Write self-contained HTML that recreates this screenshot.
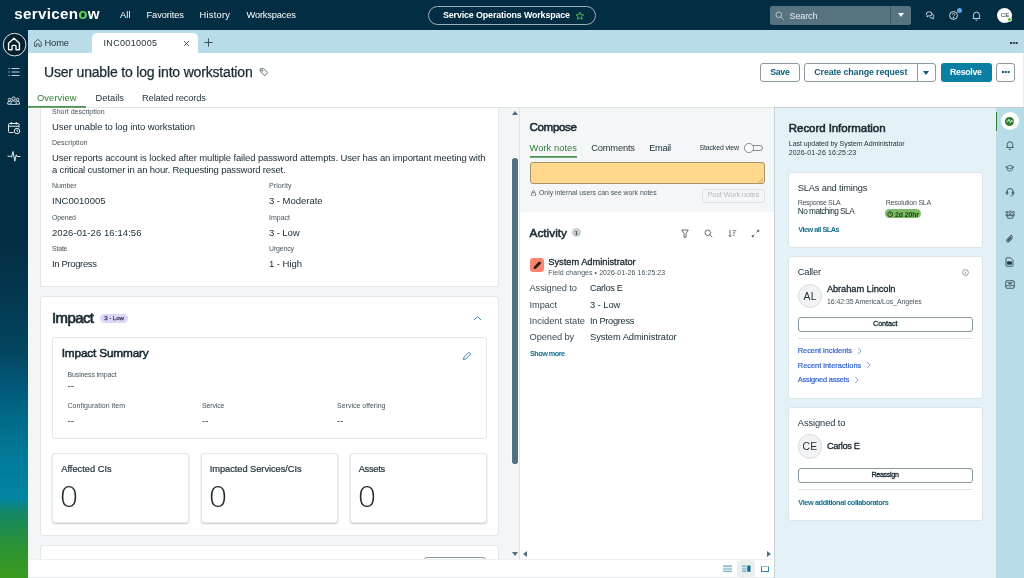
<!DOCTYPE html>
<html lang="en"><head><meta charset="utf-8"><title>INC0010005 | Service Operations Workspace</title>
<style>
*{box-sizing:border-box;margin:0;padding:0}
html,body{width:1024px;height:578px;overflow:hidden;background:#fff;font-family:"Liberation Sans",sans-serif;color:#182a33}
#root{position:absolute;left:0;top:0;width:1024px;height:578px;overflow:hidden;will-change:transform}
.a{position:absolute;white-space:nowrap}
.zero{font-family:"DejaVu Sans Light","DejaVu Sans","Liberation Sans",sans-serif;font-weight:200;font-size:27.500px;line-height:32px;color:#1d2a31;transform:scaleX(1.15);transform-origin:0 0}
</style></head><body>
<div id="root">
<div class="a" style="left:0px;top:0px;width:1024px;height:30px;background:#032d42"></div>
<div class="a" style="left:0px;top:30px;width:28px;height:548px;background:linear-gradient(180deg,#032d42 0%,#032d42 38%,#03374f 48%,#03455f 58.400%,#02587a 65%,#026a8a 70.800%,#027a99 78%,#0285a3 85.400%,#148768 88%,#1f8d4a 91.200%,#2e9430 95%,#3a9a1e 100%)"></div>
<div class="a" style="left:28px;top:30px;width:996px;height:23px;background:#b8dde8"></div>
<div class="a" style="left:28px;top:53px;width:996px;height:54.5px;background:#fff"></div>
<div class="a" style="left:28px;top:107px;width:746px;height:1px;background:#e0e5e8"></div>
<div class="a" style="left:774px;top:107px;width:250px;height:1px;background:#c4ced3"></div>
<div class="a" style="left:1023px;top:53px;width:1px;height:54px;background:#eceff0"></div>
<div class="a" style="left:28px;top:108px;width:491px;height:451px;background:#f3f5f6"></div>
<div class="a" style="left:519px;top:108px;width:1px;height:451px;background:#dfe4e7"></div>
<div class="a" style="left:520px;top:108px;width:254px;height:104px;background:#f4f6f7"></div>
<div class="a" style="left:520px;top:212px;width:254px;height:347px;background:#fff"></div>
<div class="a" style="left:774px;top:108px;width:1px;height:470px;background:#c8d2d7"></div>
<div class="a" style="left:775px;top:108px;width:221px;height:470px;background:#e4f1f6"></div>
<div class="a" style="left:996px;top:108px;width:28px;height:470px;background:#b8dde8"></div>
<div class="a" style="left:28px;top:558.5px;width:746px;height:1px;background:#edf0f1"></div>
<div class="a" style="left:28px;top:559.5px;width:746px;height:18.5px;background:#fff"></div>
<div class="a" style="left:28px;top:577px;width:746px;height:1px;background:#e9ecee"></div>
<div class="a" style="left:14.2px;top:4.2px;font-size:15.2px;line-height:20px;color:#fff;font-weight:bold;letter-spacing:0.3px;">servicen<span style="color:#62d84e">o</span>w</div>
<div class="a" style="left:120px;top:8.7px;font-size:9.3px;line-height:12px;letter-spacing:0.13px;color:#fff;">All</div>
<div class="a" style="left:146.5px;top:8.7px;font-size:9.3px;line-height:12px;letter-spacing:-0.09px;color:#fff;">Favorites</div>
<div class="a" style="left:199.5px;top:8.7px;font-size:9.3px;line-height:12px;letter-spacing:0.26px;color:#fff;">History</div>
<div class="a" style="left:246.5px;top:8.7px;font-size:9.3px;line-height:12px;letter-spacing:-0.17px;color:#fff;">Workspaces</div>
<div class="a" style="left:428px;top:6px;width:168px;height:19px;border:1px solid #9fb0b9;border-radius:10px"></div>
<div class="a" style="left:443px;top:8.8px;font-size:8.9px;line-height:12px;letter-spacing:-0.13px;color:#fff;font-weight:bold;">Service Operations Workspace</div>
<svg class="a" style="left:574.7px;top:10.5px" width="9.6" height="9.6" viewBox="0 0 24 24" ><path d="M12 3l2.700 6.200 6.600.600-5 4.400 1.500 6.500L12 17.300 6.200 20.700l1.500-6.500-5-4.400 6.600-.600z" fill="none" stroke="#62d84e" stroke-width="2" stroke-linejoin="round"/></svg>
<div class="a" style="left:770px;top:6px;width:141px;height:18.5px;background:#56737f;border-radius:2px"></div>
<div class="a" style="left:890px;top:6px;width:1px;height:18.5px;background:#3c5a67"></div>
<svg class="a" style="left:774.5px;top:10.5px" width="9.5" height="9.5" viewBox="0 0 20 20" ><circle cx="8" cy="8" r="6" fill="none" stroke="#dbe4e8" stroke-width="1.500"/><path d="M12.500 12.500L18 18" stroke="#dbe4e8" stroke-width="1.500"/></svg>
<div class="a" style="left:789.5px;top:9.6px;font-size:9px;line-height:12px;letter-spacing:-0.1px;color:#e6edf0;">Search</div>
<div class="a" style="left:897.500px;top:13px;width:0;height:0;border-left:3.500px solid transparent;border-right:3.500px solid transparent;border-top:4.500px solid #fff"></div>
<svg class="a" style="left:925px;top:10px" width="10.5" height="10.5" viewBox="0 0 24 24" fill="none" stroke="#e6edf0" stroke-width="2"><path d="M3 9a5 4.500 0 0 1 5-4.500h3a5 4.500 0 0 1 0 9H8l-3 2.500v-3.500A4.500 4.500 0 0 1 3 9z"/><path d="M15.500 9.500a4.500 4.500 0 0 1 3.500 7.500v3l-3-2h-2.500a4.500 4.500 0 0 1-3-1.500"/></svg>
<svg class="a" style="left:947.5px;top:9px" width="12" height="12" viewBox="0 0 26 26" fill="none" stroke="#e6edf0" stroke-width="2"><circle cx="12" cy="14" r="8.500"/><path d="M9.500 12a2.500 2.500 0 1 1 3.500 2.300c-.700.300-1 .700-1 1.500" stroke-width="1.800"/><circle cx="12" cy="18.500" r=".800" fill="#e6edf0"/></svg>
<div class="a" style="left:956.5px;top:7.5px;width:5px;height:5px;border-radius:50%;background:#5aa7e6"></div>
<svg class="a" style="left:971px;top:9.8px" width="11" height="11" viewBox="0 0 26 26" fill="none" stroke="#e6edf0" stroke-width="2"><path d="M6 18v-6a7 7 0 0 1 14 0v6l1.500 2h-17z" stroke-linejoin="round"/><path d="M11 22.500a2 2 0 0 0 4 0"/></svg>
<div class="a" style="left:997px;top:7.5px;width:15px;height:15px;border-radius:50%;background:#fff"></div>
<div class="a" style="left:1000.7px;top:10.9px;font-size:6.2px;line-height:8px;color:#182a33;">CE</div>
<div class="a" style="left:1006.5px;top:17px;width:5px;height:5px;border-radius:50%;background:#4fb33a;border:1px solid #fff"></div>
<svg class="a" style="left:1.5px;top:31.5px" width="26" height="26" viewBox="0 0 26 26" ><circle cx="12.600" cy="12.650" r="11.300" fill="#06202d" stroke="#dfe6ea" stroke-width="1"/></svg>
<svg class="a" style="left:6.1px;top:36px" width="16" height="16" viewBox="0 0 28 28" fill="none" stroke="#fff" stroke-width="2.400" stroke-linejoin="round"><path d="M4.500 12.500L14 4l9.500 8.500V23a1 1 0 0 1-1 1H17.500v-6a1.500 1.500 0 0 0-1.500-1.500h-4a1.500 1.500 0 0 0-1.500 1.500v6H5.500a1 1 0 0 1-1-1z"/></svg>
<svg class="a" style="left:8.2px;top:67.3px" width="12" height="10" viewBox="0 0 24 20" fill="none" stroke="#e8eef1" stroke-width="1.700"><path d="M7 3h16M7 10h16M7 17h16"/><path d="M1 3h2.500M1 10h2.500M1 17h2.500"/></svg>
<svg class="a" style="left:7.4px;top:96px" width="13.2" height="9.4" viewBox="0 0 28 20" fill="none" stroke="#e8eef1" stroke-width="1.900"><circle cx="14" cy="5.500" r="3.600"/><circle cx="5.500" cy="7.500" r="2.800"/><circle cx="22.500" cy="7.500" r="2.800"/><path d="M8.500 18.500v-4a4 4 0 0 1 4-4h3a4 4 0 0 1 4 4v4z"/><path d="M8 17.500H1.500v-3a3 3 0 0 1 3-3h3M20 17.500h6.500v-3a3 3 0 0 0-3-3h-3"/></svg>
<svg class="a" style="left:7px;top:121px" width="14" height="14" viewBox="0 0 28 28" fill="none" stroke="#e8eef1" stroke-width="2"><path d="M13 23H5a2 2 0 0 1-2-2V7a2 2 0 0 1 2-2h17a2 2 0 0 1 2 2v6"/><path d="M3 10.500h21M8.500 2v5M18.500 2v5"/><circle cx="20" cy="20" r="5.500"/><path d="M20 17v3.200l2 1"/></svg>
<svg class="a" style="left:7px;top:149px" width="14" height="14" viewBox="0 0 28 28" fill="none" stroke="#e8eef1" stroke-width="2" stroke-linejoin="round" stroke-linecap="round"><path d="M2 14.500h5l2 2 3-11.500 3.500 19.500 3-13 1.500 3.500H26"/></svg>
<svg class="a" style="left:32.8px;top:37.6px" width="9.8" height="9.8" viewBox="0 0 28 28" fill="none" stroke="#3a4d57" stroke-width="2.600" stroke-linejoin="round"><path d="M4.500 12.500L14 4l9.500 8.500V23a1 1 0 0 1-1 1H17.500v-6a1.500 1.500 0 0 0-1.500-1.500h-4a1.500 1.500 0 0 0-1.500 1.500v6H5.500a1 1 0 0 1-1-1z"/></svg>
<div class="a" style="left:44.5px;top:36.7px;font-size:9.3px;line-height:12px;letter-spacing:-0.1px;color:#22343d;">Home</div>
<div class="a" style="left:92px;top:33px;width:106px;height:20px;background:#fff;border-radius:5px 5px 0 0"></div>
<div class="a" style="left:103.5px;top:36.5px;font-size:9px;line-height:12px;letter-spacing:0.33px;color:#22343d;">INC0010005</div>
<svg class="a" style="left:183px;top:40px" width="7" height="7" viewBox="0 0 10 10" stroke="#3a4d57" stroke-width="1.300"><path d="M1.500 1.500l7 7M8.500 1.500l-7 7"/></svg>
<svg class="a" style="left:204px;top:38px" width="9" height="9" viewBox="0 0 10 10" stroke="#3a4d57" stroke-width="1.100"><path d="M5 .500v9M.500 5h9"/></svg>
<div class="a" style="left:1010px;top:41.5px;width:2px;height:2px;background:#2c3e47;box-shadow:2.800px 0 #2c3e47,5.600px 0 #2c3e47"></div>
<div class="a" style="left:44px;top:62.8px;font-size:14px;line-height:18px;letter-spacing:-0.18px;color:#182a33;-webkit-text-stroke:0.25px #182a33;">User unable to log into workstation</div>
<svg class="a" style="left:259px;top:67px" width="10" height="10" viewBox="0 0 20 20" fill="none" stroke="#3a4d57" stroke-width="1.600" stroke-linejoin="round"><path d="M2.500 3.500h7l8 7.500-6 6.500-9-8.500z"/><circle cx="6.500" cy="7.500" r="1.200"/></svg>
<div class="a" style="left:37px;top:92px;font-size:9.3px;line-height:12px;letter-spacing:0.11px;color:#2e7d32;">Overview</div>
<div class="a" style="left:95.5px;top:92px;font-size:9.3px;line-height:12px;letter-spacing:0.01px;color:#22343d;">Details</div>
<div class="a" style="left:142px;top:92px;font-size:9.3px;line-height:12px;letter-spacing:-0.12px;color:#22343d;">Related records</div>
<svg class="a" style="left:28px;top:106px" width="58" height="4" viewBox="0 0 58 4"><rect x="0" y="0.1" width="58" height="1.6" fill="#3a8a3c"/></svg>
<div class="a" style="left:760px;top:63px;width:40px;height:18.5px;border:1px solid #8a979e;border-radius:3px;background:#fff;"></div>
<div class="a" style="left:770.3px;top:66.7px;font-size:8.8px;line-height:11px;letter-spacing:-0.35px;color:#0f5d7a;font-weight:bold;">Save</div>
<div class="a" style="left:804px;top:63px;width:132px;height:18.5px;border:1px solid #8a979e;border-radius:3px;background:#fff;"></div>
<div class="a" style="left:814.3px;top:66.7px;font-size:8.8px;line-height:11px;letter-spacing:-0.09px;color:#0f5d7a;font-weight:bold;">Create change request</div>
<div class="a" style="left:917px;top:63px;width:1px;height:18.5px;background:#8a979e"></div>
<div class="a" style="left:923px;top:70.500px;width:0;height:0;border-left:3.500px solid transparent;border-right:3.500px solid transparent;border-top:4px solid #0f5d7a"></div>
<div class="a" style="left:941px;top:63px;width:51px;height:18.5px;border-radius:3px;background:#0a7fa3"></div>
<div class="a" style="left:950px;top:66.7px;font-size:8.8px;line-height:11px;letter-spacing:-0.29px;color:#fff;font-weight:bold;">Resolve</div>
<div class="a" style="left:996px;top:63px;width:19px;height:18.5px;border:1px solid #8a979e;border-radius:3px;background:#fff;"></div>
<div class="a" style="left:1002.3px;top:71px;width:2px;height:2px;background:#0f5d7a;box-shadow:2.800px 0 #0f5d7a,5.600px 0 #0f5d7a"></div>
<div class="a" style="left:40px;top:107.5px;width:458.5px;height:179.5px;background:#fff;border:1px solid #e4e8eb;border-radius:3px;border-top:none;border-radius:0 0 2px 2px"></div>
<div class="a" style="left:52px;top:107px;font-size:7px;line-height:9px;letter-spacing:0px;color:#45535b;">Short description</div>
<div class="a" style="left:52px;top:121px;font-size:9.5px;line-height:12px;letter-spacing:-0.08px;color:#182a33;">User unable to log into workstation</div>
<div class="a" style="left:52px;top:138.25px;font-size:7px;line-height:9px;letter-spacing:0.05px;color:#45535b;">Description</div>
<div class="a" style="left:52px;top:152.25px;font-size:9.5px;line-height:12px;letter-spacing:-0.13px;color:#182a33;">User reports account is locked after multiple failed password attempts. User has an important meeting with</div>
<div class="a" style="left:52px;top:164px;font-size:9.5px;line-height:12px;letter-spacing:-0.18px;color:#182a33;">a critical customer in an hour. Requesting password reset.</div>
<div class="a" style="left:52px;top:181.25px;font-size:7px;line-height:9px;letter-spacing:-0.08px;color:#45535b;">Number</div>
<div class="a" style="left:52px;top:195px;font-size:9.5px;line-height:12px;letter-spacing:0.02px;color:#182a33;">INC0010005</div>
<div class="a" style="left:269px;top:181.25px;font-size:7px;line-height:9px;letter-spacing:0.1px;color:#45535b;">Priority</div>
<div class="a" style="left:269px;top:195px;font-size:9.5px;line-height:12px;letter-spacing:-0.03px;color:#182a33;">3 - Moderate</div>
<div class="a" style="left:52px;top:212.75px;font-size:7px;line-height:9px;letter-spacing:-0.18px;color:#45535b;">Opened</div>
<div class="a" style="left:52px;top:226.6px;font-size:9.5px;line-height:12px;letter-spacing:0.07px;color:#182a33;">2026-01-26 16:14:56</div>
<div class="a" style="left:269px;top:212.75px;font-size:7px;line-height:9px;letter-spacing:0px;color:#45535b;">Impact</div>
<div class="a" style="left:269px;top:226.6px;font-size:9.5px;line-height:12px;letter-spacing:-0.11px;color:#182a33;">3 - Low</div>
<div class="a" style="left:52px;top:244.25px;font-size:7px;line-height:9px;letter-spacing:-0.21px;color:#45535b;">State</div>
<div class="a" style="left:52px;top:258.2px;font-size:9.5px;line-height:12px;letter-spacing:-0.36px;color:#182a33;">In Progress</div>
<div class="a" style="left:269px;top:244.25px;font-size:7px;line-height:9px;letter-spacing:-0.18px;color:#45535b;">Urgency</div>
<div class="a" style="left:269px;top:258.2px;font-size:9.5px;line-height:12px;letter-spacing:-0.04px;color:#182a33;">1 - High</div>
<div class="a" style="left:40px;top:296px;width:458.5px;height:239.5px;background:#fff;border:1px solid #e4e8eb;border-radius:3px;"></div>
<div class="a" style="left:52px;top:308px;font-size:15px;line-height:20px;letter-spacing:-0.6px;color:#182a33;-webkit-text-stroke:0.7px #182a33;">Impact</div>
<div class="a" style="left:100px;top:313.5px;width:28px;height:9px;border-radius:4.500px;background:#dcd6f7"></div>
<div class="a" style="left:104.2px;top:314.2px;font-size:6.1px;line-height:8px;letter-spacing:-0.03px;color:#3a3563;-webkit-text-stroke:0.25px #3a3563;">3 - Low</div>
<svg class="a" style="left:472.6px;top:315px" width="9" height="6" viewBox="0 0 18 12" fill="none" stroke="#1f7a9c" stroke-width="1.800"><path d="M2 10l7-7 7 7"/></svg>
<div class="a" style="left:52px;top:337px;width:435px;height:102px;background:#fff;border:1px solid #e4e8eb;border-radius:3px;"></div>
<div class="a" style="left:61.75px;top:345.75px;font-size:11.8px;line-height:15px;letter-spacing:-0.17px;color:#182a33;-webkit-text-stroke:0.55px #182a33;">Impact Summary</div>
<svg class="a" style="left:462px;top:351px" width="10" height="10" viewBox="0 0 20 20" fill="none" stroke="#1f6f94" stroke-width="1.700" stroke-linejoin="round"><path d="M3 17l1-4.500L14 2.500l3.500 3.500L7.500 16z"/></svg>
<div class="a" style="left:67.5px;top:369.75px;font-size:7px;line-height:9px;letter-spacing:-0.14px;color:#45535b;">Business impact</div>
<div class="a" style="left:67.5px;top:380.3px;font-size:9.5px;line-height:12px;letter-spacing:0.17px;color:#182a33;">--</div>
<div class="a" style="left:67.5px;top:401px;font-size:7px;line-height:9px;letter-spacing:0.04px;color:#45535b;">Configuration item</div>
<div class="a" style="left:67.5px;top:415px;font-size:9.5px;line-height:12px;letter-spacing:0.17px;color:#182a33;">--</div>
<div class="a" style="left:202px;top:401px;font-size:7px;line-height:9px;letter-spacing:-0.14px;color:#45535b;">Service</div>
<div class="a" style="left:202px;top:415px;font-size:9.5px;line-height:12px;letter-spacing:0.17px;color:#182a33;">--</div>
<div class="a" style="left:337px;top:401px;font-size:7px;line-height:9px;letter-spacing:0px;color:#45535b;">Service offering</div>
<div class="a" style="left:337px;top:415px;font-size:9.5px;line-height:12px;letter-spacing:0.17px;color:#182a33;">--</div>
<div class="a" style="left:52px;top:453px;width:136.5px;height:70px;background:#fff;border:1px solid #e4e8eb;border-radius:3px;box-shadow:0 1px 2px rgba(0,0,0,.2)"></div>
<div class="a" style="left:61.2px;top:462.7px;font-size:9.3px;line-height:12px;letter-spacing:0px;color:#22343d;-webkit-text-stroke:0.2px #22343d;">Affected CIs</div>
<div class="a zero" style="left:59.4px;top:480.500px">0</div>
<div class="a" style="left:200.5px;top:453px;width:137px;height:70px;background:#fff;border:1px solid #e4e8eb;border-radius:3px;box-shadow:0 1px 2px rgba(0,0,0,.2)"></div>
<div class="a" style="left:209.7px;top:462.7px;font-size:9.3px;line-height:12px;letter-spacing:-0.05px;color:#22343d;-webkit-text-stroke:0.2px #22343d;">Impacted Services/CIs</div>
<div class="a zero" style="left:207.9px;top:480.500px">0</div>
<div class="a" style="left:349.5px;top:453px;width:137px;height:70px;background:#fff;border:1px solid #e4e8eb;border-radius:3px;box-shadow:0 1px 2px rgba(0,0,0,.2)"></div>
<div class="a" style="left:358.7px;top:462.7px;font-size:9.3px;line-height:12px;letter-spacing:-0.28px;color:#22343d;-webkit-text-stroke:0.2px #22343d;">Assets</div>
<div class="a zero" style="left:356.9px;top:480.500px">0</div>
<div class="a" style="left:40px;top:545px;width:458.5px;height:30px;background:#fff;border:1px solid #e4e8eb;border-radius:3px;"></div>
<div class="a" style="left:424px;top:557px;width:62px;height:20px;border:1px solid #8a979e;border-radius:3px;background:#fff;"></div>
<div class="a" style="left:28px;top:558.5px;width:746px;height:1px;background:#edf0f1"></div>
<div class="a" style="left:28px;top:559.5px;width:746px;height:17.5px;background:#fff"></div>
<div class="a" style="left:28px;top:577px;width:746px;height:1px;background:#e9ecee"></div>
<div class="a" style="left:512px;top:111px;width:0;height:0;border-left:3px solid transparent;border-right:3px solid transparent;border-bottom:4px solid #4f6f80"></div>
<div class="a" style="left:511px;top:157px;width:8px;height:308px;background:#fbfcfc;border-radius:4px"></div>
<div class="a" style="left:512px;top:158px;width:5.6px;height:306px;background:#52707f;border-radius:2.800px"></div>
<div class="a" style="left:512px;top:552px;width:0;height:0;border-left:3px solid transparent;border-right:3px solid transparent;border-top:4px solid #4f6f80"></div>
<div class="a" style="left:523px;top:551px;width:0;height:0;border-top:3px solid transparent;border-bottom:3px solid transparent;border-right:4px solid #4f6f80"></div>
<div class="a" style="left:767px;top:551px;width:0;height:0;border-top:3px solid transparent;border-bottom:3px solid transparent;border-left:4px solid #4f6f80"></div>
<svg class="a" style="left:723px;top:565px" width="9" height="7" viewBox="0 0 18 14" ><path d="M0 2.500h18" stroke-width="4" stroke="#8fc0cf"/><path d="M0 8h18M0 12.500h18" stroke="#2a88a5" stroke-width="1.600"/></svg>
<div class="a" style="left:737px;top:559.5px;width:18px;height:18.5px;background:#eceff0;border-radius:4px"></div>
<svg class="a" style="left:742px;top:565px" width="9" height="7" viewBox="0 0 18 14" ><path d="M0 2.500h9" stroke-width="4" stroke="#8fc0cf"/><path d="M0 8h9M0 12.500h9" stroke="#2a88a5" stroke-width="1.600"/><rect x="10.500" y="1" width="6.500" height="12.500" rx="1" fill="#0f6f91"/></svg>
<div class="a" style="left:760.5px;top:566px;width:8.5px;height:6px;border:1px solid #2a88a5;border-top:1.500px solid #8fc0cf;border-radius:1px"></div>
<div class="a" style="left:529.5px;top:119.25px;font-size:11.6px;line-height:15px;letter-spacing:-0.36px;color:#182a33;-webkit-text-stroke:0.55px #182a33;">Compose</div>
<div class="a" style="left:529.5px;top:141.5px;font-size:9.3px;line-height:12px;letter-spacing:0.07px;color:#2e7d32;">Work notes</div>
<svg class="a" style="left:529.5px;top:156px" width="47.5" height="4" viewBox="0 0 47.5 4"><rect x="0" y="0.1" width="47.5" height="1.6" fill="#3a8a3c"/></svg>
<div class="a" style="left:591.25px;top:141.5px;font-size:9.3px;line-height:12px;letter-spacing:-0.17px;color:#22343d;">Comments</div>
<div class="a" style="left:649.25px;top:141.5px;font-size:9.3px;line-height:12px;letter-spacing:-0.38px;color:#22343d;">Email</div>
<div class="a" style="left:699.5px;top:143px;font-size:7px;line-height:9px;letter-spacing:-0.16px;color:#22343d;">Stacked view</div>
<div class="a" style="left:746px;top:145.25px;width:17px;height:5.5px;border:1px solid #7d8a91;border-radius:3px;background:#f4f6f7"></div>
<div class="a" style="left:744px;top:143.25px;width:9.5px;height:9.5px;border:1px solid #7d8a91;border-radius:50%;background:#fff"></div>
<div class="a" style="left:530px;top:162.25px;width:234.5px;height:21.5px;background:#ffd88d;border:1px solid #a89566;border-radius:3px"></div>
<svg class="a" style="left:758px;top:177.5px" width="5" height="5" viewBox="0 0 10 10" ><path d="M1 9L9 1M5 9l4-4" stroke="#8a7a50" stroke-width="1"/></svg>
<svg class="a" style="left:530.5px;top:189.5px" width="5" height="6.5" viewBox="0 0 10 13" fill="none" stroke="#45535b" stroke-width="1.300"><rect x="1" y="5.500" width="8" height="6.500" rx="1"/><path d="M2.800 5.500V3.500a2.200 2.200 0 0 1 4.400 0v2"/></svg>
<div class="a" style="left:539px;top:187.9px;font-size:6.9px;line-height:9px;letter-spacing:-0.03px;color:#45535b;">Only internal users can see work notes</div>
<div class="a" style="left:702px;top:189.25px;width:62.5px;height:13.5px;border:1px solid #dfe3e6;border-radius:3px;background:#f4f6f7"></div>
<div class="a" style="left:707.5px;top:190.2px;font-size:7.5px;line-height:10px;letter-spacing:-0.22px;color:#b3bdc2;">Post Work notes</div>
<div class="a" style="left:529.5px;top:225.5px;font-size:11.8px;line-height:15px;letter-spacing:0.02px;color:#182a33;-webkit-text-stroke:0.55px #182a33;">Activity</div>
<div class="a" style="left:571.75px;top:228.25px;width:9px;height:9px;border-radius:50%;background:#c9d0d3"></div>
<div class="a" style="left:574.7px;top:228.9px;font-size:6px;line-height:8px;color:#3a4a52;font-weight:bold;">1</div>
<svg class="a" style="left:681px;top:229px" width="8" height="9" viewBox="0 0 16 18" fill="none" stroke="#2c3e47" stroke-width="1.500" stroke-linejoin="round"><path d="M1.500 2h13L10 8.500v8H6v-8z"/></svg>
<svg class="a" style="left:704px;top:229px" width="9" height="9" viewBox="0 0 18 18" fill="none" stroke="#2c3e47" stroke-width="1.500" stroke-linejoin="round"><circle cx="7.500" cy="7.500" r="5.500"/><path d="M11.500 11.500L16.500 16.500"/></svg>
<svg class="a" style="left:727.5px;top:229px" width="9" height="9" viewBox="0 0 18 18" fill="none" stroke="#2c3e47" stroke-width="1.500" stroke-linejoin="round"><path d="M4 2v13.500M1.500 13l2.500 2.500 2.500-2.500M9.500 3.500h7M9.500 8h5M9.500 12.500h3"/></svg>
<svg class="a" style="left:751px;top:229px" width="9" height="9" viewBox="0 0 18 18" fill="none" stroke="#2c3e47" stroke-width="1.500" stroke-linejoin="round"><path d="M12 2.500h3.500V6M15.500 2.500l-4.500 4.500M6 15.500H2.500V12M2.500 15.500l4.500-4.500"/></svg>
<div class="a" style="left:530px;top:258px;width:13.75px;height:14px;background:#f8866f;border-radius:3px"></div>
<svg class="a" style="left:531.7px;top:259.8px" width="10.6" height="10.6" viewBox="0 0 18 18" ><path d="M2.500 15.500l.800-4.200L11.500 3a1.500 1.500 0 0 1 2.100 0l1.400 1.400a1.500 1.500 0 0 1 0 2.100l-8.300 8.200z" fill="#2a1a16"/></svg>
<div class="a" style="left:548.25px;top:255.75px;font-size:9.3px;line-height:12px;letter-spacing:-0.02px;color:#14232b;-webkit-text-stroke:0.28px #14232b;">System Administrator</div>
<div class="a" style="left:548.25px;top:268px;font-size:6.9px;line-height:9px;letter-spacing:0.11px;color:#45535b;">Field changes • 2026-01-26 16:25:23</div>
<div class="a" style="left:529.5px;top:282.25px;font-size:9.3px;line-height:12px;letter-spacing:-0.11px;color:#3d4b53;">Assigned to</div>
<div class="a" style="left:590px;top:282.25px;font-size:9.3px;line-height:12px;letter-spacing:-0.38px;color:#182a33;">Carlos E</div>
<div class="a" style="left:529.5px;top:298.75px;font-size:9.3px;line-height:12px;letter-spacing:-0.08px;color:#3d4b53;">Impact</div>
<div class="a" style="left:590px;top:298.75px;font-size:9.3px;line-height:12px;letter-spacing:-0.04px;color:#182a33;">3 - Low</div>
<div class="a" style="left:529.5px;top:314.75px;font-size:9.3px;line-height:12px;letter-spacing:0.01px;color:#3d4b53;">Incident state</div>
<div class="a" style="left:590px;top:314.75px;font-size:9.3px;line-height:12px;letter-spacing:-0.31px;color:#182a33;">In Progress</div>
<div class="a" style="left:529.5px;top:331px;font-size:9.3px;line-height:12px;letter-spacing:-0.09px;color:#3d4b53;">Opened by</div>
<div class="a" style="left:590px;top:331px;font-size:9.3px;line-height:12px;letter-spacing:-0.06px;color:#182a33;">System Administrator</div>
<div class="a" style="left:530px;top:349px;font-size:7.3px;line-height:9px;letter-spacing:-0.54px;color:#156f8f;font-weight:bold;">Show more</div>
<div class="a" style="left:788.8px;top:121.4px;font-size:11.5px;line-height:15px;letter-spacing:-0.06px;color:#182a33;-webkit-text-stroke:0.55px #182a33;">Record Information</div>
<div class="a" style="left:788.8px;top:138.9px;font-size:7px;line-height:9px;letter-spacing:-0.06px;color:#22343d;">Last updated by System Administrator</div>
<div class="a" style="left:788.8px;top:148.1px;font-size:7px;line-height:9px;letter-spacing:0.13px;color:#22343d;">2026-01-26 16:25:23</div>
<div class="a" style="left:788px;top:172px;width:195px;height:76px;background:#fff;border:1px solid #dce4e8;border-radius:3px;"></div>
<div class="a" style="left:797.8px;top:182.1px;font-size:9.3px;line-height:12px;letter-spacing:-0.19px;color:#22343d;">SLAs and timings</div>
<div class="a" style="left:797.8px;top:197.5px;font-size:7px;line-height:9px;letter-spacing:-0.35px;color:#45535b;">Response SLA</div>
<div class="a" style="left:797.8px;top:206.1px;font-size:8.3px;line-height:11px;letter-spacing:-0.55px;color:#182a33;">No matching SLA</div>
<div class="a" style="left:885.7px;top:197.5px;font-size:7px;line-height:9px;letter-spacing:-0.21px;color:#45535b;">Resolution SLA</div>
<div class="a" style="left:885px;top:209.2px;width:36.3px;height:9.3px;background:#7dba68;border-radius:4.600px"></div>
<svg class="a" style="left:887.2px;top:210.6px" width="6.5" height="6.5" viewBox="0 0 12 12" fill="none" stroke="#163d10" stroke-width="1.500"><circle cx="6" cy="6" r="4.600"/><path d="M6 3.200V6l2 1.300"/></svg>
<div class="a" style="left:895px;top:209.5px;font-size:6.9px;line-height:9px;letter-spacing:-0.09px;color:#163d10;font-weight:bold;">2d 20hr</div>
<div class="a" style="left:798.3px;top:224.6px;font-size:7.4px;line-height:10px;letter-spacing:-0.55px;color:#156f8f;font-weight:bold;">View all SLAs</div>
<div class="a" style="left:788px;top:256px;width:195px;height:143px;background:#fff;border:1px solid #dce4e8;border-radius:3px;"></div>
<div class="a" style="left:797.8px;top:265.7px;font-size:9.3px;line-height:12px;letter-spacing:-0.22px;color:#22343d;">Caller</div>
<svg class="a" style="left:962.4px;top:269.2px" width="7" height="7" viewBox="0 0 14 14" fill="none" stroke="#45535b" stroke-width="1.100"><circle cx="7" cy="7" r="5.800"/><path d="M7 6.500v3.500M7 4v.800"/></svg>
<div class="a" style="left:797.8px;top:283.6px;width:24.2px;height:24.2px;border-radius:50%;background:#f1f3f4;border:1px solid #d8dde0"></div>
<div class="a" style="left:803.4px;top:289.5px;font-size:10.3px;line-height:13px;letter-spacing:0.4px;color:#22343d;">AL</div>
<div class="a" style="left:826.9px;top:283.4px;font-size:9.3px;line-height:12px;letter-spacing:-0.08px;color:#14232b;-webkit-text-stroke:0.28px #14232b;">Abraham Lincoln</div>
<div class="a" style="left:826.9px;top:297px;font-size:6.9px;line-height:9px;letter-spacing:-0.02px;color:#45535b;">16:42:35 America/Los_Angeles</div>
<div class="a" style="left:797.8px;top:317px;width:175.6px;height:14.5px;border:1px solid #8a979e;border-radius:3px;background:#fff;"></div>
<div class="a" style="left:873px;top:319.1px;font-size:7.3px;line-height:9px;letter-spacing:-0.11px;color:#182a33;-webkit-text-stroke:0.3px #182a33;">Contact</div>
<div class="a" style="left:797.8px;top:338.3px;width:175.6px;height:1px;background:#dfe4e7"></div>
<div class="a" style="left:797.8px;top:346px;font-size:7.4px;line-height:10px;letter-spacing:-0.03px;color:#2f5fd0;-webkit-text-stroke:0.2px #2f5fd0;">Recent incidents</div>
<svg class="a" style="left:857px;top:347px" width="5" height="8" viewBox="0 0 10 16" fill="none" stroke="#2f5fd0" stroke-width="1.200"><path d="M2 1.500l6 6.500-6 6.500"/></svg>
<div class="a" style="left:797.8px;top:360.7px;font-size:7.4px;line-height:10px;letter-spacing:0.01px;color:#2f5fd0;-webkit-text-stroke:0.2px #2f5fd0;">Recent interactions</div>
<svg class="a" style="left:866px;top:361px" width="5" height="8" viewBox="0 0 10 16" fill="none" stroke="#2f5fd0" stroke-width="1.200"><path d="M2 1.500l6 6.500-6 6.500"/></svg>
<div class="a" style="left:797.8px;top:375px;font-size:7.4px;line-height:10px;letter-spacing:-0.16px;color:#2f5fd0;-webkit-text-stroke:0.2px #2f5fd0;">Assigned assets</div>
<svg class="a" style="left:854px;top:376px" width="5" height="8" viewBox="0 0 10 16" fill="none" stroke="#2f5fd0" stroke-width="1.200"><path d="M2 1.500l6 6.500-6 6.500"/></svg>
<div class="a" style="left:788px;top:407px;width:195px;height:114px;background:#fff;border:1px solid #dce4e8;border-radius:3px;"></div>
<div class="a" style="left:797.8px;top:416.8px;font-size:9.3px;line-height:12px;letter-spacing:-0.09px;color:#22343d;">Assigned to</div>
<div class="a" style="left:797.8px;top:434.4px;width:24.2px;height:24.2px;border-radius:50%;background:#f1f3f4;border:1px solid #d8dde0"></div>
<div class="a" style="left:802.6px;top:440.3px;font-size:10.3px;line-height:13px;letter-spacing:0.29px;color:#22343d;">CE</div>
<div class="a" style="left:826.9px;top:440.3px;font-size:9.3px;line-height:12px;letter-spacing:-0.37px;color:#14232b;-webkit-text-stroke:0.28px #14232b;">Carlos E</div>
<div class="a" style="left:797.8px;top:468px;width:175.6px;height:15px;border:1px solid #8a979e;border-radius:3px;background:#fff;"></div>
<div class="a" style="left:871.5px;top:470.2px;font-size:7.2px;line-height:9px;letter-spacing:-0.37px;color:#182a33;-webkit-text-stroke:0.3px #182a33;">Reassign</div>
<div class="a" style="left:797.8px;top:489px;width:175.6px;height:1px;background:#dfe4e7"></div>
<div class="a" style="left:798.3px;top:498px;font-size:7.4px;line-height:10px;letter-spacing:-0.43px;color:#156f8f;font-weight:bold;">View additional collaborators</div>
<div class="a" style="left:996px;top:112px;width:1px;height:19px;background:#2e7d32"></div>
<div class="a" style="left:1000.7px;top:112.3px;width:18px;height:18px;border-radius:50%;background:#fff"></div>
<div class="a" style="left:1004.9px;top:116.5px;width:9.6px;height:9.6px;border-radius:50%;background:#2e7d32"></div>
<svg class="a" style="left:1005.7px;top:118.3px" width="8" height="6" viewBox="0 0 16 12" fill="none" stroke="#fff" stroke-width="1.600" stroke-linejoin="round"><path d="M1 6.500h3l2-4 3 7 2-5 1 2h3"/></svg>
<svg class="a" style="left:1004.7px;top:139.8px" width="10" height="10" viewBox="0 0 20 20" fill="none" stroke="#22343d" stroke-width="1.500" stroke-linejoin="round"><path d="M4.500 13.500V9a5.500 5.500 0 0 1 11 0v4.500l1.500 1.500H3z"/><path d="M8 17.500a2 2 0 0 0 4 0"/></svg>
<svg class="a" style="left:1004.9px;top:163.5px" width="9.6" height="8.7" viewBox="0 0 22 20" fill="none" stroke="#22343d" stroke-width="1.500" stroke-linejoin="round"><path d="M1.500 7L11 3l9.500 4L11 11z"/><path d="M5 9v4.500c1.500 2 4 2.500 6 2.500s4.500-.500 6-2.500V9"/></svg>
<svg class="a" style="left:1004.7px;top:186.5px" width="10" height="10.5" viewBox="0 0 20 21" fill="none" stroke="#22343d" stroke-width="1.500" stroke-linejoin="round"><path d="M4 12V9a6 6 0 0 1 12 0v3"/><rect x="2.500" y="9.500" width="3" height="5" rx="1"/><rect x="14.500" y="9.500" width="3" height="5" rx="1"/><path d="M16 14.500c0 2.500-2 3.500-5 3.500"/></svg>
<svg class="a" style="left:1004.5px;top:210.3px" width="10.4" height="9" viewBox="0 0 22 19" fill="none" stroke="#22343d" stroke-width="1.500" stroke-linejoin="round"><circle cx="11" cy="4.500" r="2.700"/><circle cx="4" cy="5" r="2"/><circle cx="18" cy="5" r="2"/><path d="M1 10.500c1-1.500 4-1.500 5.500 0M15.500 10.500c1.500-1.500 4.500-1.500 5.500 0M6.500 11.500c1-3 8-3 9 0"/><path d="M1.500 12h19M4.500 12.500l1.500 5h10l1.500-5"/></svg>
<svg class="a" style="left:1005.2px;top:233.5px" width="9" height="10" viewBox="0 0 18 20" fill="none" stroke="#22343d" stroke-width="1.900" stroke-linejoin="round"><path d="M14.500 8.500l-6 6.500a3 3 0 0 1-4.500-4l7-7.500a2.100 2.100 0 0 1 3.200 2.700l-6.500 7a1 1 0 0 1-1.600-1.300l5.500-6"/></svg>
<svg class="a" style="left:1005.1px;top:256.6px" width="9" height="10" viewBox="0 0 18 20" fill="none" stroke="#22343d" stroke-width="1.500" stroke-linejoin="round"><path d="M2 3a1.500 1.500 0 0 1 1.500-1.500h7.500l5 5V17a1.500 1.500 0 0 1-1.500 1.500H3.500A1.500 1.500 0 0 1 2 17z"/><rect x="5" y="9.500" width="8" height="5" fill="#22343d"/></svg>
<svg class="a" style="left:1004.7px;top:280px" width="10" height="9" viewBox="0 0 20 18" fill="none" stroke="#22343d" stroke-width="1.500" stroke-linejoin="round"><rect x="1.500" y="1.500" width="17" height="15" rx="2"/><path d="M1.500 12.500l5.500-2.500 2 2.500h2l2-2.500 5.500 2.500M5 3.500l5 6 5-6"/><path d="M10 4v4M8 6h4" stroke-width="1.200"/></svg>
</div>
</body></html>
